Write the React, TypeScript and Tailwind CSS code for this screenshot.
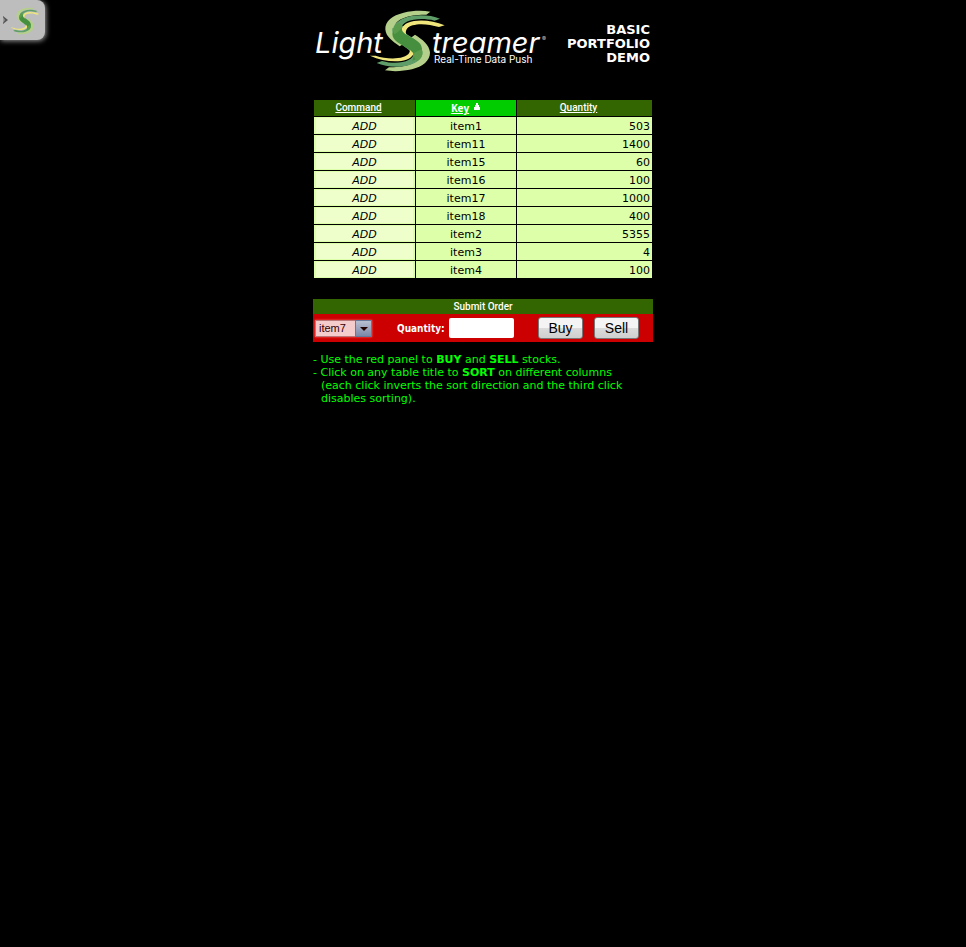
import React from "react";

const rows = [
  ["item1", 503],
  ["item11", 1400],
  ["item15", 60],
  ["item16", 100],
  ["item17", 1000],
  ["item18", 400],
  ["item2", 5355],
  ["item3", 4],
  ["item4", 100],
] as const;

function Swoosh() {
  return (
    <>
      <path fill="#b5d08a" d="M376 35C352 31 322 32 296 38C262 46 240 64 241 88C243 111 262 123 284 139L310 124C286 110 268 96 270 78C273 57 312 43 364 44Z" />
      <path fill="#b5d08a" d="M240 211C264 215 294 214 321 208C353 200 376 182 375 157C373 134 352 118 330 104L306 122C330 137 348 151 345 169C342 188 302 203 252 202Z" />
      <path fill="#5f9e68" d="M262 85C258 116 292 134 314 152C327 164 328 180 322 190C352 180 360 152 340 128C320 106 290 103 294 78Z" />
      <path fill="#5f9e68" d="M405 56C377 45 333 42 301 53C272 63 260 80 266 98C274 118 306 132 324 152L346 152C340 125 291 107 290 86C289 62 338 50 389 62Z" />
      <path fill="#5f9e68" d="M215 189C243 201 284 204 316 194C344 185 358 168 351 149C343 129 311 117 294 97L270 94C276 121 326 139 326 160C327 183 281 197 231 183Z" />
      <path fill="#f0e67c" d="M419 76C382 60 336 57 309 68C290 76 286 91 293 105L306 110C298 94 304 82 323 76C345 69 374 73 402 81Z" />
      <path fill="#f0e67c" d="M195 167C232 184 277 189 304 179C325 171 331 157 324 143L311 137C320 155 312 165 294 171C269 179 237 175 212 167Z" />
      <path fill="#468f3e" d="M290 82C262 84 254 106 272 122C288 136 316 145 325 160C328 168 325 174 322 182C348 174 358 152 346 132C332 112 288 108 290 82Z" />
      <path fill="#5a9c4b" d="M282 68C267 75 261 89 268 103C280 98 286 88 291 84C290 77 287 72 282 68ZM336 184C350 176 356 163 350 148L325 160C328 170 328 177 336 184Z" />
    </>
  );
}

function Logo() {
  return (
    <svg width="240" height="72" viewBox="313 0 240 72" role="img" aria-label="LightStreamer" className="overflow-visible">
      <g fill="#fff" fontFamily="Inter, sans-serif" fontStyle="italic" fontWeight="400">
        <text x="315" y="53" fontSize="29">Light</text>
        <text x="432" y="53" fontSize="29">treamer</text>
      </g>
      <text x="434" y="63" fontSize="10" fill="#fff" fontFamily="Inter, sans-serif">Real-Time Data Push</text>
      <text x="542" y="41" fontSize="6" fill="#ccc" fontFamily="Inter, sans-serif">®</text>
      <g transform="translate(305 0) scale(.3333)"><Swoosh /></g>
    </svg>
  );
}

const headButton = "h-4 leading-4 underline font-medium";

export default function App() {
  return (
    <div className="min-h-screen bg-black font-['DejaVu_Sans',Verdana,sans-serif] text-[11px]">
      <button aria-label="Open Lightstreamer monitor" className="absolute left-0 top-0 flex h-10 w-[45px] items-center rounded-r-lg bg-[#bdbdbd] pl-[3px] shadow-[1px_1px_5px_#999]">
        <svg width="5" height="8" viewBox="0 0 5 8"><path d="M0 0L5 4L0 8Z" fill="#555" /><path d="M0 1L2 4L0 7Z" fill="#999" /></svg>
        <svg width="30" height="28" viewBox="190 28 234 190" preserveAspectRatio="none" className="ml-0.5 mt-0.5"><Swoosh /></svg>
      </button>
      <main className="mx-auto w-[340px]">
        <header className="flex h-[99px] justify-between">
          <Logo />
          <h1 className="pr-[3px] pt-[23px] text-right text-[13px]/[14px] font-bold text-white">BASIC<br />PORTFOLIO<br />DEMO</h1>
        </header>
        <table className="w-full table-fixed border-separate border-spacing-px">
          <colgroup><col className="w-[101px]" /><col className="w-[100px]" /><col /></colgroup>
          <thead>
            <tr className="h-4 bg-[#336600] font-[Roboto,sans-serif] text-[10px]/[16px] text-white">
              <th className="p-0 pr-3"><button className={headButton}>Command</button></th>
              <th className="bg-[#00cc00] p-0">
                <div className="flex h-4 justify-center gap-1 font-['Open_Sans',sans-serif]">
                  <button className="h-4 font-bold leading-4 underline">Key</button>
                  <svg width="8" height="8" viewBox="0 0 8 8" className="mt-[3px]"><path d="M3 0H5V2H6V4H7V7H1V4H2V2H3Z" fill="#fff" /></svg>
                </div>
              </th>
              <th className="p-0 pr-3"><button className={headButton}>Quantity</button></th>
            </tr>
          </thead>
          <tbody>
            {rows.map(([key, quantity]) => (
              <tr key={key} className="h-[17px] bg-[#ddffaa] leading-[15px]">
                <td className="px-0.5 py-px text-center italic"><div className="h-[15px] bg-[#eeffcc] leading-[17px]">ADD</div></td>
                <td className="p-0 pt-0.5 text-center">{key}</td>
                <td className="p-0 pr-0.5 pt-0.5 text-right">{quantity}</td>
              </tr>
            ))}
          </tbody>
        </table>
        <form className="mt-5" onSubmit={(e) => e.preventDefault()}>
          <h2 className="h-[15px] bg-[#336600] text-center font-[Roboto,sans-serif] text-[10px]/[15px] font-medium text-white">Submit Order</h2>
          <div className="flex h-7 items-center bg-[#cc0000] pl-0.5">
            <div className="relative h-[17px] w-[57px] shadow-[0_0_2px_#ff6666]">
              <select aria-label="Stock" className="h-full w-full appearance-none border border-[#b77] bg-[#f5cccc] pl-[3px] font-['Liberation_Sans',sans-serif] text-[11px]/[15px] text-[#300]" defaultValue="item7">
                <option>item7</option>
                <option>item8</option>
              </select>
              <span className="pointer-events-none absolute right-0 top-0 flex h-full w-[17px] items-center justify-center border border-[#667799] bg-linear-to-b from-[#b8bfd2] to-[#7c88a8] pt-0.5">
                <svg width="8" height="4" viewBox="0 0 8 4"><path d="M0 0H8L4 4Z" fill="#200" /></svg>
              </span>
            </div>
            <label htmlFor="quantity" className="ml-[25px] w-[52px] font-['DejaVu_Sans_Condensed','DejaVu_Sans',sans-serif] text-[10px] font-bold text-white">Quantity:</label>
            <input id="quantity" className="h-5 w-[65px] rounded-xs bg-white px-1 text-black" />
            <button className="ml-6 h-[22px] w-[45px] rounded-[3px] border border-[#777] bg-linear-to-b from-[#f4f4f4] from-50% via-[#dcdcdc] via-50% to-[#cfcfcf] font-['Liberation_Sans',sans-serif] text-sm/[20px] text-black">Buy</button>
            <button className="ml-[11px] h-[22px] w-[45px] rounded-[3px] border border-[#777] bg-linear-to-b from-[#f4f4f4] from-50% via-[#dcdcdc] via-50% to-[#cfcfcf] font-['Liberation_Sans',sans-serif] text-sm/[20px] text-black">Sell</button>
          </div>
        </form>
        <ul className="mt-[11px] whitespace-nowrap leading-[13px] text-[#00ff00]">
          <li className="pl-2 -indent-2">- Use the red panel to <b>BUY</b> and <b>SELL</b> stocks.</li>
          <li className="pl-2">
            <p className="-indent-2">- Click on any table title to <b>SORT</b> on different columns</p>
            <p>(each click inverts the sort direction and the third click</p>
            <p>disables sorting).</p>
          </li>
        </ul>
      </main>
    </div>
  );
}
